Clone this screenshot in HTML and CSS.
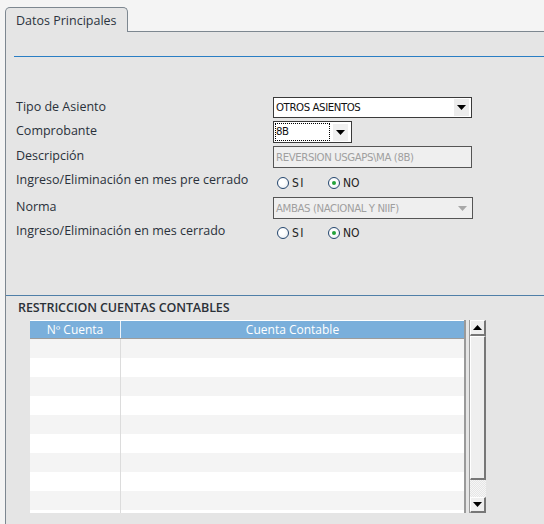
FILE: index.html
```html
<!DOCTYPE html>
<html>
<head>
<meta charset="utf-8">
<link rel="stylesheet" href="styles.css">
</head>
<body>
<div class="page">
  <div class="tabs">
    <div class="tab">Datos Principales</div>
    <div class="tab-fill"></div>
  </div>
  <div class="panel">
    <div class="rule"></div>
    <div class="form">
      <div class="label">Tipo de Asiento</div>
      <div class="ctl"><div class="select w200"><span class="val">OTROS ASIENTOS</span><span class="arrow"><svg width="9" height="5" viewBox="0 0 9 5"><path d="M0 0 L9 0 L4.5 5 Z"/></svg></span></div></div>

      <div class="label">Comprobante</div>
      <div class="ctl"><div class="select w80"><span class="val focus">8B</span><span class="arrow"><svg width="9" height="5" viewBox="0 0 9 5"><path d="M0 0 L9 0 L4.5 5 Z"/></svg></span></div></div>

      <div class="label">Descripción</div>
      <div class="ctl"><div class="input disabled w200">REVERSION USGAPS\MA (8B)</div></div>

      <div class="label">Ingreso/Eliminación en mes pre cerrado</div>
      <div class="ctl radios">
        <span class="opt"><span class="radio"></span>SI</span>
        <span class="opt"><span class="radio on"></span>NO</span>
      </div>

      <div class="label">Norma</div>
      <div class="ctl"><div class="select disabled w201"><span class="val">AMBAS (NACIONAL Y NIIF)</span><span class="arrow"><svg width="9" height="5" viewBox="0 0 9 5"><path d="M0 0 L9 0 L4.5 5 Z"/></svg></span></div></div>

      <div class="label">Ingreso/Eliminación en mes cerrado</div>
      <div class="ctl radios">
        <span class="opt"><span class="radio"></span>SI</span>
        <span class="opt"><span class="radio on"></span>NO</span>
      </div>
    </div>

    <div class="section">
      <div class="section-title">RESTRICCION CUENTAS CONTABLES</div>
      <div class="table-wrap">
        <div class="grid">
          <div class="ghead">
            <div class="c1">Nº Cuenta</div>
            <div class="c2">Cuenta Contable</div>
          </div>
          <div class="gbody">
            <div class="grow"><div class="c1"></div><div class="c2"></div></div>
            <div class="grow"><div class="c1"></div><div class="c2"></div></div>
            <div class="grow"><div class="c1"></div><div class="c2"></div></div>
            <div class="grow"><div class="c1"></div><div class="c2"></div></div>
            <div class="grow"><div class="c1"></div><div class="c2"></div></div>
            <div class="grow"><div class="c1"></div><div class="c2"></div></div>
            <div class="grow"><div class="c1"></div><div class="c2"></div></div>
            <div class="grow"><div class="c1"></div><div class="c2"></div></div>
            <div class="grow"><div class="c1"></div><div class="c2"></div></div>
            <div class="grow"><div class="c1"></div><div class="c2"></div></div>
          </div>
        </div>
        <div class="scroll">
          <div class="sbtn"><svg width="9" height="5" viewBox="0 0 9 5"><path d="M4.5 0 L9 5 L0 5 Z" fill="#000"/></svg></div>
          <div class="thumb"></div>
          <div class="track"></div>
          <div class="sbtn"><svg width="9" height="5" viewBox="0 0 9 5"><path d="M0 0 L9 0 L4.5 5 Z" fill="#000"/></svg></div>
        </div>
      </div>
    </div>
  </div>
</div>
</body>
</html>
```

FILE: styles.css
```css
html, body {
  margin: 0;
  padding: 0;
  background: #f4f4f4;
  height: 100%;
  overflow: hidden;
}
.page {
  padding: 7px 0 0 5px;
  font-family: "Open Sans", "Noto Sans", sans-serif;
  font-size: 12.5px;
  color: #333;
}
.tabs {
  display: flex;
  height: 25px;
}
.tab {
  width: 123px;
  height: 25px;
  box-sizing: border-box;
  padding: 4px 0 0 10px;
  line-height: 18px;
  font-size: 12.5px;
  white-space: nowrap;
  background: #e5e5e5;
  border: 1px solid #7d8790;
  border-bottom: none;
  border-radius: 5px 5px 0 0;
  color: #2c3440;
}
.tab-fill {
  flex: 1;
  border-bottom: 1px solid #7d8790;
  box-sizing: border-box;
}
.panel {
  background: #e5e5e5;
  border-left: 1px solid #7d8790;
  height: 500px;
}
.rule {
  margin-left: 8px;
  padding-top: 24px;
  border-bottom: 1px solid #2a7ec4;
}
.form {
  display: grid;
  grid-template-columns: 257px 1fr;
  grid-template-rows: 24px 25px 24px 27px 24px 24px;
  margin-top: 40px;
  padding-left: 10px;
}
.label {
  line-height: 18px;
  margin-top: 1px;
  align-self: start;
  color: #2a313b;
  white-space: nowrap;
}
.ctl {
  display: flex;
  align-items: flex-start;
}
.select, .input {
  box-sizing: border-box;
  height: 21px;
  border: 1px solid #3a3a3a;
  background: #fff;
  display: flex;
  align-items: center;
  font-family: "DejaVu Sans Condensed", "DejaVu Sans", sans-serif;
  font-stretch: condensed;
  font-size: 11.3px;
  letter-spacing: -0.4px;
  color: #111;
}
.w200 { width: 199px; }
.w201 { width: 200px; height: 22px; }
.w80 { width: 79px; height: 22px; padding: 1px; }
.select .val {
  flex: 1;
  padding-left: 2px;
  white-space: nowrap;
  overflow: hidden;
}
.select .val.focus {
  border: 1px dotted #000;
  height: 16px;
  line-height: 16px;
  padding-left: 0;
  margin-right: 3px;
}
.arrow {
  width: 15px;
  height: 17px;
  margin-right: 2px;
  background: #ececec;
  display: flex;
  align-items: center;
  justify-content: center;
  fill: #000;
}
.w80 .arrow { background: #f0f0f0; }
.disabled {
  background: #efefef;
  color: #a0a0a0;
  border-color: #555;
}
.input.disabled {
  padding-left: 2px;
  height: 22px;
}
.select.disabled .arrow {
  background: transparent;
  fill: #a8a8a8;
}
.radios {
  align-items: center;
  align-self: center;
  margin-top: -1px;
}
.opt {
  display: flex;
  align-items: center;
  width: 51px;
  font-family: "DejaVu Sans Condensed", "DejaVu Sans", sans-serif;
  font-stretch: condensed;
  font-size: 12px;
  color: #222;
}
.opt:first-child { letter-spacing: 1.5px; }
.radio {
  box-sizing: border-box;
  width: 12px;
  height: 12px;
  border-radius: 50%;
  border: 1px solid #24466e;
  background: radial-gradient(circle at 40% 40%, #fff 30%, #e4e8ee 100%);
  margin: 0 3px 0 4px;
  display: flex;
  align-items: center;
  justify-content: center;
}
.radio.on::after {
  content: "";
  width: 4px;
  height: 4px;
  border-radius: 50%;
  background: #23a23a;
}
.section {
  margin-top: 50px;
  border-top: 1px solid #4f7fa8;
}
.section-title {
  margin: 4px 0 0 12px;
  font-size: 12.5px;
  font-weight: 600;
  letter-spacing: -0.1px;
  color: #2b3138;
  line-height: 16px;
}
.table-wrap {
  display: flex;
  margin: 4px 0 0 24px;
}
.grid {
  width: 436px;
  border-right: 2px solid #9a9a9a;
  box-sizing: border-box;
}
.ghead {
  display: flex;
  height: 19px;
  background: #7aafdb;
  border-top: 1px solid #fff;
  border-bottom: 1px solid #9c9c9c;
  box-sizing: border-box;
  color: #fff;
  line-height: 17px;
  font-size: 12px;
}
.c1 {
  width: 90px;
  text-align: center;
  border-right: 1px solid #dcdcdc;
}
.ghead .c1 { border-right-color: #eef4fa; }
.c2 {
  flex: 1;
  text-align: center;
}
.gbody {
  height: 174px;
  overflow: hidden;
}
.grow {
  display: flex;
  height: 19px;
  background: #f4f4f4;
}
.grow:nth-child(even) { background: #fff; }
.scroll {
  width: 17px;
  margin-left: 3px;
  height: 193px;
  display: flex;
  flex-direction: column;
  border-left: 1px solid #9a9a9a;
  box-sizing: border-box;
}
.sbtn, .thumb {
  box-sizing: border-box;
  background: #efefef;
  border-top: 1px solid #fff;
  border-left: 1px solid #fff;
  border-right: 2px solid #777;
  border-bottom: 2px solid #777;
  display: flex;
  align-items: center;
  justify-content: center;
}
.sbtn { height: 16px; }
.thumb { height: 144px; }
.track {
  flex: 1;
  background-color: #f2f2f2;
  background-image: repeating-conic-gradient(#e6e6e6 0 25%, #f6f6f6 0 50%);
  background-size: 2px 2px;
}
```
